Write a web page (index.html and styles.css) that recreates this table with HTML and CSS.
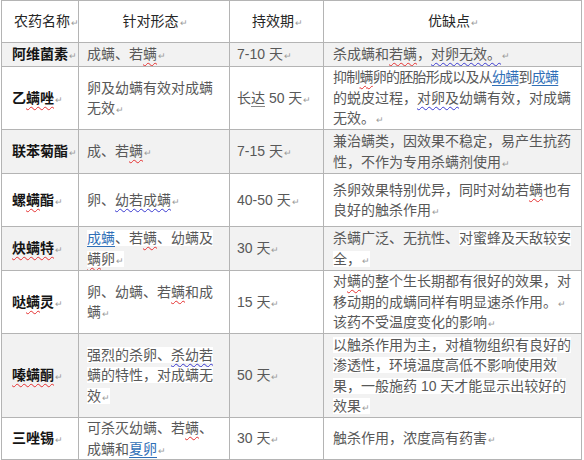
FILE: index.html
```html
<!DOCTYPE html>
<html lang="zh-CN">
<head>
<meta charset="utf-8">
<title>杀螨剂对比</title>
<link rel="stylesheet" href="styles.css">
</head>
<body>
<table class="grid">
  <colgroup>
    <col class="c1"><col class="c2"><col class="c3"><col class="c4">
  </colgroup>
  <thead>
    <tr class="head">
      <th class="name-h">农药名称<span class="pm">↵</span></th>
      <th>针对形态<span class="pm">↵</span></th>
      <th>持效期<span class="pm">↵</span></th>
      <th>优缺点<span class="pm">↵</span></th>
    </tr>
  </thead>
  <tbody>
    <tr class="shade r1">
      <td class="name">阿维菌素<span class="pm">↵</span></td>
      <td>成螨、若<span class="sp">螨</span><span class="pm">↵</span></td>
      <td class="dur">7-10 天<span class="pm">↵</span></td>
      <td class="desc">杀成螨和<span class="sp">若螨</span>，<span class="gr">对卵无效。</span><span class="pm">↵</span></td>
    </tr>
    <tr class="r2">
      <td class="name">乙<span class="sp">螨唑</span><span class="pm">↵</span></td>
      <td>卵及幼螨有效对成螨<br>无效<span class="pm">↵</span></td>
      <td class="dur">长<span class="ul">达</span> 50 天<span class="pm">↵</span></td>
      <td class="desc"><span class="tight">抑制<span class="sp">螨</span>卵的胚胎形成以及从<a class="lk">幼螨</a>到<a class="lk">成螨</a></span><br>的蜕皮过程，<span class="gr">对卵及</span>幼螨有效，对成螨<br>无效。<span class="pm">↵</span></td>
    </tr>
    <tr class="shade r3">
      <td class="name">联苯菊酯<span class="pm">↵</span></td>
      <td>成、若<span class="sp">螨</span><span class="pm">↵</span></td>
      <td class="dur">7-15 天<span class="pm">↵</span></td>
      <td class="desc">兼治螨类，因效果不稳定，易产生抗药<br>性，不作为专用杀螨剂使用<span class="pm">↵</span></td>
    </tr>
    <tr class="r4">
      <td class="name">螺<span class="sp">螨</span>酯<span class="pm">↵</span></td>
      <td>卵、<span class="gr">幼若成螨</span><span class="pm">↵</span></td>
      <td class="dur">40-50 天<span class="pm">↵</span></td>
      <td class="desc">杀卵效果特别优异，同时对幼若<span class="sp">螨</span>也有<br>良好的触杀作用<span class="pm">↵</span></td>
    </tr>
    <tr class="shade r5">
      <td class="name"><span class="sp">炔螨特</span><span class="pm">↵</span></td>
      <td><span class="hl"><a class="lk">成螨</a>、若<span class="sp">螨</span>、幼螨及</span><br><span class="hl"><span class="sp">螨</span>卵<span class="pm">↵</span></span></td>
      <td class="dur">30 天<span class="pm">↵</span></td>
      <td class="desc">杀螨广泛、无抗性、<span class="hl">对蜜蜂及天敌较安</span><br><span class="hl">全，<span class="pm">↵</span></span></td>
    </tr>
    <tr class="r6">
      <td class="name">哒<span class="sp">螨</span>灵<span class="pm">↵</span></td>
      <td>卵、幼螨、若<span class="sp">螨</span>和成<br>螨<span class="pm">↵</span></td>
      <td class="dur">15 天<span class="pm">↵</span></td>
      <td class="desc">对<span class="sp">螨</span>的整个生长期都有很好的效果，对<br>移动期的成螨同样有明显速杀作用。<span class="pm">↵</span><br>该药不受温度变化的影响<span class="pm">↵</span></td>
    </tr>
    <tr class="shade r7">
      <td class="name"><span class="sp">嗪螨酮</span><span class="pm">↵</span></td>
      <td><span class="hl">强烈的杀卵、<span class="gr">杀幼若</span></span><br><span class="hl">螨的特性，对成螨无</span><br><span class="hl">效<span class="pm">↵</span></span></td>
      <td class="dur">50 天<span class="pm">↵</span></td>
      <td class="desc"><span class="hl">以触杀作用为主，对植物组织有良好的</span><br><span class="hl">渗透性，环境温度高低不影响使用效</span><br><span class="hl">果，一般施药 10 天才能显示出较好的</span><br><span class="hl">效果<span class="pm">↵</span></span></td>
    </tr>
    <tr class="r8">
      <td class="name">三唑锡<span class="pm">↵</span></td>
      <td>可杀灭幼螨、若<span class="sp">螨</span>、<br>成螨和<a class="lk">夏卵</a><span class="pm">↵</span></td>
      <td class="dur">30 天<span class="pm">↵</span></td>
      <td class="desc">触杀作用，浓度高有药害<span class="pm">↵</span></td>
    </tr>
  </tbody>
</table>
</body>
</html>
```

FILE: styles.css
```css
html, body {
  margin: 0;
  padding: 0;
  background: #ffffff;
}

body {
  font-family: "Liberation Sans", "Noto Sans CJK SC", sans-serif;
  font-size: 14px;
  color: #585858;
}

.grid {
  margin-left: 1px;
  border-collapse: collapse;
  table-layout: fixed;
  width: 580px;
}

.c1 { width: 77px; }
.c2 { width: 151px; }
.c3 { width: 94px; }
.c4 { width: 258px; }

.grid th,
.grid td {
  border: 1px solid #b4b4b4;
  line-height: 20.5px;
  padding: 0 6px 0 8px;
  vertical-align: middle;
  white-space: nowrap;
  overflow: hidden;
  text-align: left;
}

.grid th {
  font-weight: normal;
  color: #262626;
  text-align: center;
}

.grid th.name-h {
  text-align: left;
  padding-left: 12px;
}

.grid td.name {
  font-weight: bold;
  color: #141414;
  padding-left: 10px;
}

.grid td.dur {
  padding-left: 7px;
}

.grid td.desc {
  padding-left: 9px;
}

.shade td {
  background: #f2f2f2;
}

.head { height: 42px; }
.r1 { height: 24px; }
.r2 { height: 63px; }
.r3 { height: 44px; }
.r4 { height: 53px; }
.r5 { height: 44px; }
.r6 { height: 63px; }
.r7 { height: 84px; }
.r8 { height: 42px; }

.pm {
  font-size: 9px;
  line-height: 1;
  color: #9a9a9a;
  margin-left: 1px;
  font-weight: normal;
}

.sp {
  text-decoration: underline wavy #e53030;
  text-decoration-thickness: 1px;
  text-underline-offset: 3px;
}

.gr {
  text-decoration: underline wavy #3a3ad0;
  text-decoration-thickness: 1px;
  text-underline-offset: 3px;
}

.ul {
  text-decoration: underline;
  text-decoration-color: #888;
  text-underline-offset: 3px;
}

.lk {
  color: #2f6fb7;
  text-decoration: underline;
  text-underline-offset: 3px;
}

.hl {
  background: #ffffff;
}

.tight {
  letter-spacing: -0.75px;
}
```
